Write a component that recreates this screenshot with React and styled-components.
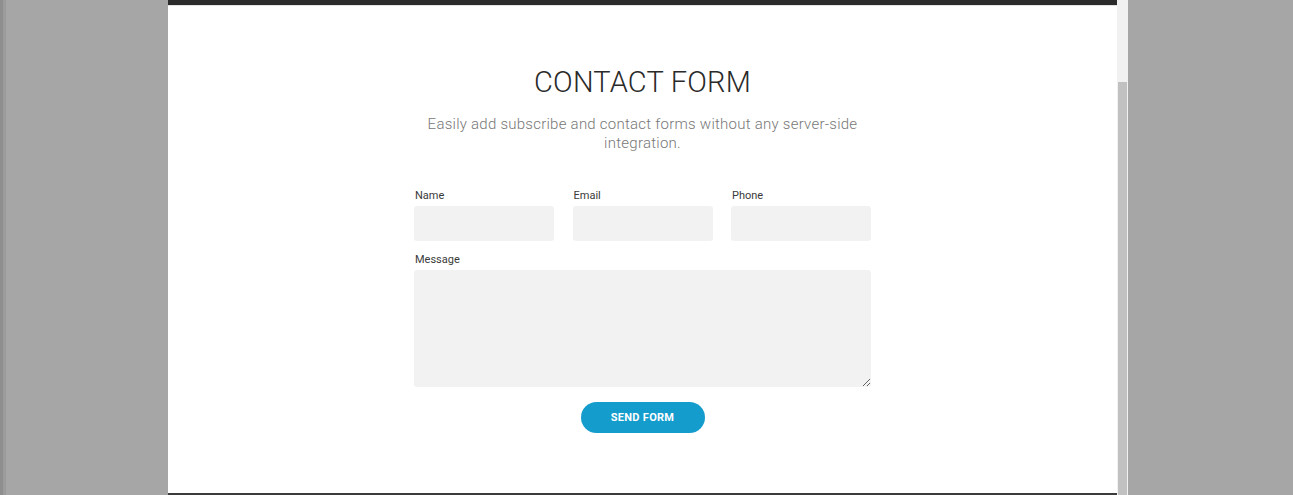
import styled, { createGlobalStyle } from "styled-components";

const GlobalStyle = createGlobalStyle`
  html, body {
    margin: 0;
    padding: 0;
    background: #a6a6a6;
    overflow: hidden;
  }
  body {
    font-family: Roboto, "Liberation Sans", sans-serif;
  }
`;

const Shell = styled.div`
  display: flex;
  height: 495px;
  width: 1293px;
`;

const Edge = styled.div`
  flex: 0 0 3px;
  background: ${(p) => p.tone};
`;

const Spacer = styled.div`
  flex: 0 0 162px;
`;

const Panel = styled.div`
  flex: 0 0 949px;
  display: flex;
  flex-direction: column;
  background: #fff;
  border-top: 5px solid #2b2b2b;
  border-bottom: 2px solid #3b3b3b;
  box-sizing: border-box;
`;

const TopLine = styled.div`
  height: 1px;
  background: #e2e2e2;
`;

const Scrollbar = styled.div`
  flex: 0 0 11px;
  display: flex;
  flex-direction: column;
  background: #f1f1f1;
`;

const Track = styled.div`
  flex: 0 0 82px;
`;

const Thumb = styled.div`
  flex: 1;
  margin: 0 1px 0 1px;
  background: #c1c1c1;
`;

const Section = styled.section`
  display: flex;
  flex-direction: column;
  align-items: center;
  padding-top: 58px;
`;

const Title = styled.h2`
  margin: 0;
  font-weight: 300;
  font-size: 29px;
  line-height: 36px;
  letter-spacing: 0.2px;
  color: #2a2a2a;
`;

const Lead = styled.p`
  margin: 15px 0 0;
  width: 460px;
  text-align: center;
  font-weight: 300;
  font-size: 15px;
  line-height: 19px;
  letter-spacing: 0.25px;
  color: #777;
`;

const Form = styled.form`
  width: 457px;
  margin-top: 36px;
  display: grid;
  grid-template-columns: repeat(3, 140px);
  justify-content: space-between;
  row-gap: 12px;
`;

const Field = styled.label`
  display: flex;
  flex-direction: column;
  gap: 3px;
  grid-column: ${(p) => (p.wide ? "1 / -1" : "auto")};
`;

const Label = styled.span`
  font-size: 11px;
  line-height: 14px;
  color: #3a3a3a;
  padding-left: 1px;
`;

const Input = styled.input`
  box-sizing: border-box;
  height: 35px;
  border: none;
  border-radius: 3px;
  background: #f2f2f2;
  outline: none;
`;

const Area = styled.textarea`
  box-sizing: border-box;
  height: 117px;
  border: none;
  border-radius: 3px;
  background: #f2f2f2;
  outline: none;
`;

const Actions = styled.div`
  grid-column: 1 / -1;
  display: flex;
  justify-content: center;
  padding-top: 3px;
`;

const Button = styled.button`
  width: 124px;
  height: 31px;
  border: none;
  border-radius: 16px;
  background: #149ccc;
  color: #fff;
  font-family: Roboto, "Liberation Sans", sans-serif;
  font-weight: 700;
  font-size: 11px;
  letter-spacing: 0.3px;
`;

export default function App() {
  return (
    <>
      <GlobalStyle />
      <Shell>
        <Edge tone="#8e8e8e" />
        <Edge tone="#9c9c9c" />
        <Spacer />
        <Panel>
          <TopLine />
          <Section>
            <Title>CONTACT FORM</Title>
            <Lead>
              Easily add subscribe and contact forms without any server-side
              integration.
            </Lead>
            <Form onSubmit={(e) => e.preventDefault()}>
              <Field>
                <Label>Name</Label>
                <Input />
              </Field>
              <Field>
                <Label>Email</Label>
                <Input />
              </Field>
              <Field>
                <Label>Phone</Label>
                <Input />
              </Field>
              <Field wide>
                <Label>Message</Label>
                <Area />
              </Field>
              <Actions>
                <Button type="submit">SEND FORM</Button>
              </Actions>
            </Form>
          </Section>
        </Panel>
        <Scrollbar>
          <Track />
          <Thumb />
        </Scrollbar>
      </Shell>
    </>
  );
}
